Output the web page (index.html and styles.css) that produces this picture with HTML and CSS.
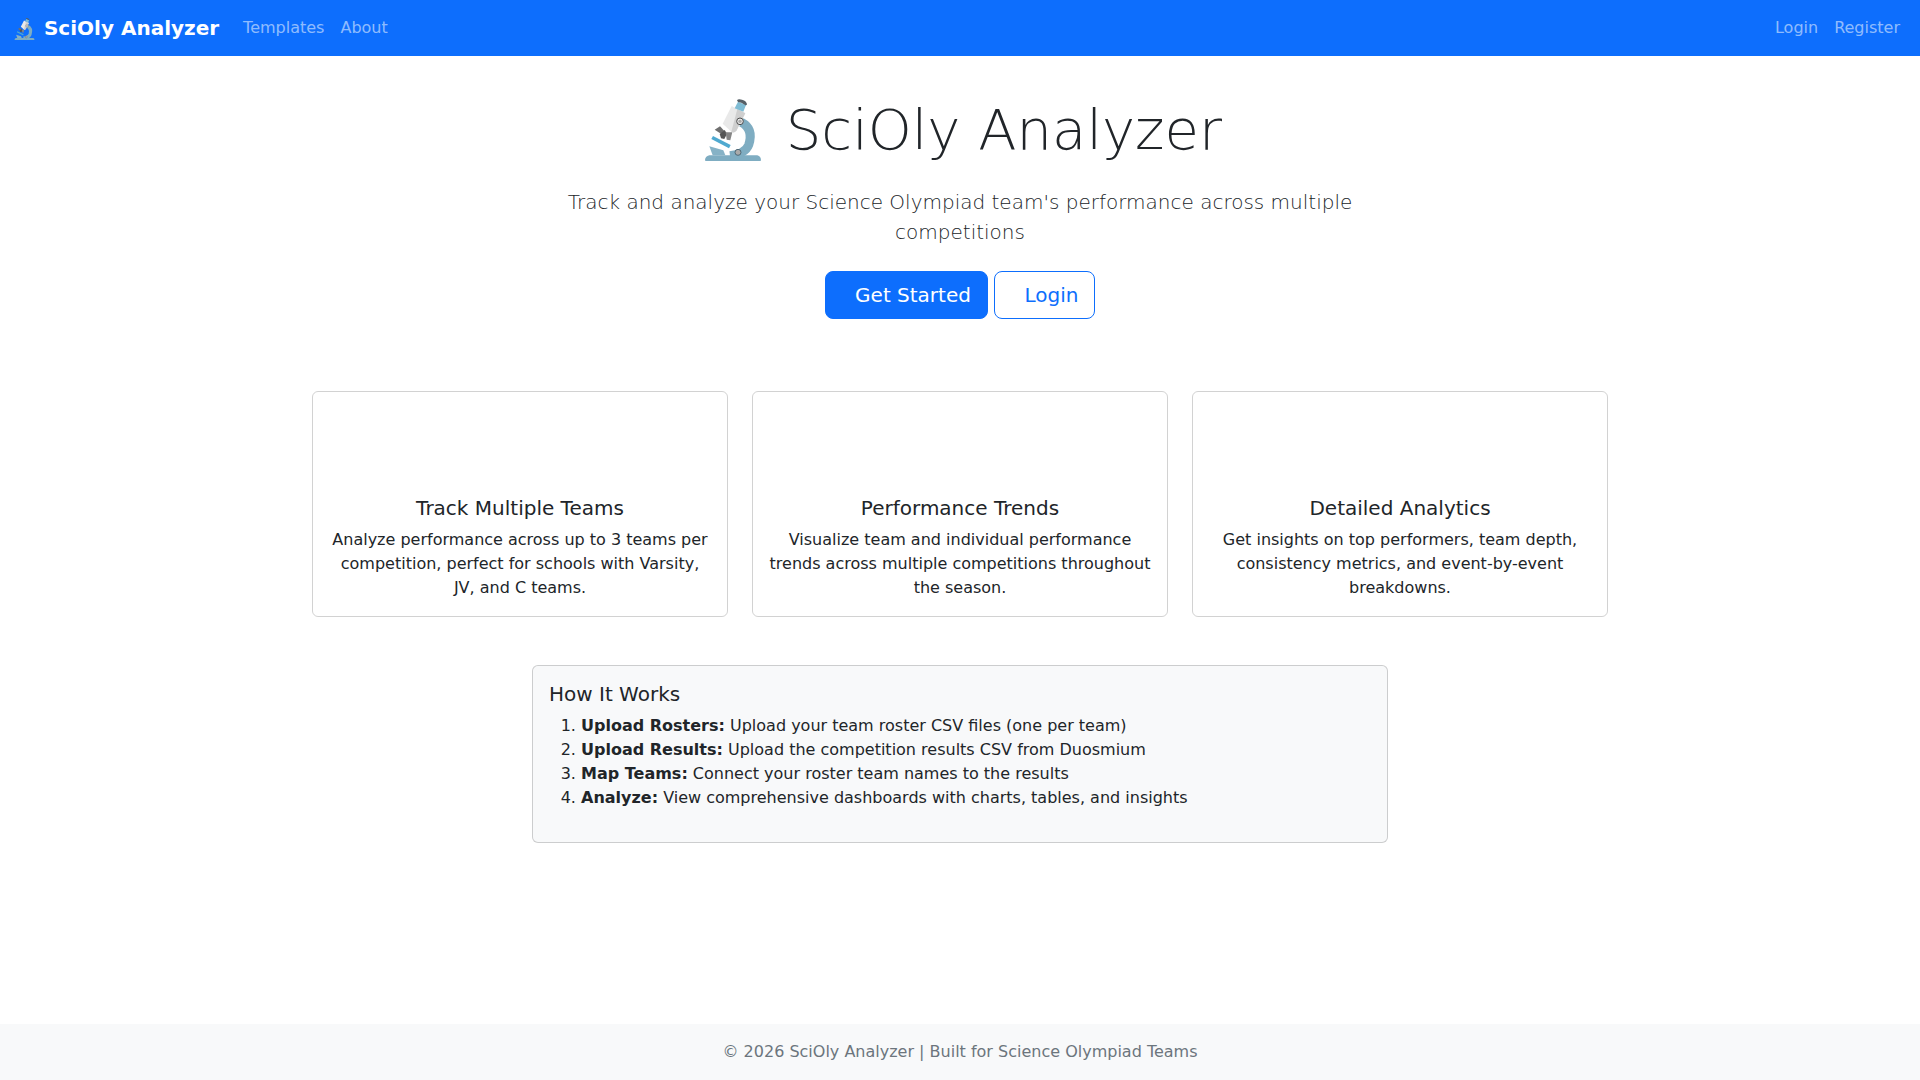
FILE: index.html
```html
<!DOCTYPE html>
<html lang="en">
<head>
<meta charset="utf-8">
<title>SciOly Analyzer</title>
<link rel="stylesheet" href="styles.css">
</head>
<body>
<svg class="defs" width="0" height="0" aria-hidden="true">
  <symbol id="scope" viewBox="54 42 210 186">
    <path d="M75 226 Q75 214 88 211 L232 211 Q243 214 243 226 Q243 228 240 228 L78 228 Q75 228 75 226 Z" fill="#7fadc2"/>
    <path d="M184 112 Q222 132 206 180 Q196 206 150 212" fill="none" stroke="#7fadc2" stroke-width="27"/>
    <path d="M88 184 L130 196 L136 211 L98 211 Z" fill="#86b2c6"/>
    <path d="M94 162 L99 153 L152 180 L147 190 Z" fill="#4fa9d0"/>
    <path d="M104 134 L120 124 L133 138 L124 147 Z" fill="#6f6f6f"/>
    <path d="M119 147 L134 135 L141 146 L133 162 L123 160 Z" fill="#555"/>
    <path d="M137 142 L157 142 L151 166 L140 164 Z" fill="#858585"/>
    <path d="M128 116 L155 63 L196 85 L170 136 Q164 146 154 140 Z" fill="#e9e9e9"/>
    <path d="M172 72 L196 85 L170 136 Q164 146 154 140 Z" fill="#cfcfcf"/>
    <path d="M164 70 L174 50 L198 60 L190 80 Z" fill="#7fbcd4"/>
    <path d="M171 46 Q174 41 186 44 Q200 48 201 58 Q199 63 194 59 Q184 51 174 51 Z" fill="#555f66"/>
    <circle cx="180" cy="109" r="10" fill="#e6e6e6" stroke="#4d4d4d" stroke-width="3"/>
    <circle cx="180" cy="109" r="5" fill="#aaa"/>
    <circle cx="174" cy="202" r="9" fill="#aaa" stroke="#4f6a78" stroke-width="3"/>
  </symbol>
</svg>
<nav class="navbar">
  <a class="brand" href="#"><svg class="emoji-sm"><use href="#scope"/></svg> SciOly Analyzer</a>
  <ul class="nav-list grow">
    <li><a class="nav-link" href="#">Templates</a></li>
    <li><a class="nav-link" href="#">About</a></li>
  </ul>
  <ul class="nav-list">
    <li><a class="nav-link" href="#">Login</a></li>
    <li><a class="nav-link" href="#">Register</a></li>
  </ul>
</nav>
<main class="container">
  <section class="hero">
    <h1 class="title"><svg class="emoji-lg"><use href="#scope"/></svg> SciOly Analyzer</h1>
    <div class="lead-wrap"><p class="lead">Track and analyze your Science Olympiad team's performance across multiple competitions</p></div>
    <div class="actions">
      <a class="btn btn-primary" href="#"><span class="icon-slot"></span>Get Started</a>
      <a class="btn btn-outline" href="#"><span class="icon-slot"></span>Login</a>
    </div>
  </section>
  <section class="cards">
    <article class="card">
      <div class="card-icon"></div>
      <h2 class="card-title">Track Multiple Teams</h2>
      <p class="card-text">Analyze performance across up to 3 teams per competition, perfect for schools with Varsity, JV, and C teams.</p>
    </article>
    <article class="card">
      <div class="card-icon"></div>
      <h2 class="card-title">Performance Trends</h2>
      <p class="card-text">Visualize team and individual performance trends across multiple competitions throughout the season.</p>
    </article>
    <article class="card">
      <div class="card-icon"></div>
      <h2 class="card-title">Detailed Analytics</h2>
      <p class="card-text">Get insights on top performers, team depth, consistency metrics, and event-by-event breakdowns.</p>
    </article>
  </section>
  <section class="how">
    <h2 class="how-title">How It Works</h2>
    <ol class="how-list">
      <li><strong>Upload Rosters:</strong> Upload your team roster CSV files (one per team)</li>
      <li><strong>Upload Results:</strong> Upload the competition results CSV from Duosmium</li>
      <li><strong>Map Teams:</strong> Connect your roster team names to the results</li>
      <li><strong>Analyze:</strong> View comprehensive dashboards with charts, tables, and insights</li>
    </ol>
  </section>
</main>
<footer class="footer">© 2026 SciOly Analyzer | Built for Science Olympiad Teams</footer>
</body>
</html>
```
FILE: styles.css
```css
* { box-sizing: border-box; }
html, body { margin: 0; padding: 0; }
body {
  min-height: 100vh;
  display: flex;
  flex-direction: column;
  font-family: "DejaVu Sans", sans-serif;
  font-size: 16px;
  line-height: 1.5;
  color: #212529;
  background: #fff;
}
a { text-decoration: none; }
.defs { display: block; height: 0; }

.navbar {
  display: flex;
  align-items: center;
  height: 56px;
  padding: 0 12px;
  background: #0d6efd;
}
.brand {
  margin-right: 16px;
  font-size: 20px;
  font-weight: 700;
  color: #fff;
  white-space: nowrap;
}
.emoji-sm {
  width: 25px;
  height: 22px;
  vertical-align: -5px;
}
.nav-list {
  display: flex;
  list-style: none;
  margin: 0;
  padding: 0;
}
.grow { flex: 1; }
.nav-link {
  display: block;
  padding: 8px;
  color: rgba(255, 255, 255, 0.55);
}

.container {
  flex: 1;
  width: 1320px;
  margin: 0 auto;
  padding: 24px 12px 0;
}
.hero {
  padding-top: 16px;
  text-align: center;
  margin-bottom: 72px;
}
.title {
  margin: 0 0 24px;
  font-size: 56px;
  font-weight: 300;
  line-height: 1.2;
}
.emoji-lg {
  width: 70px;
  height: 62px;
  margin-bottom: -10px;
  vertical-align: -2px;
}
.lead-wrap { display: flex; justify-content: center; }
.lead {
  width: 856px;
  margin: 0 0 24px;
  font-size: 20px;
  font-weight: 300;
}
.actions {
  display: flex;
  justify-content: center;
  gap: 6px;
}
.btn {
  display: inline-block;
  padding: 8px 16px;
  border: 1px solid #0d6efd;
  border-radius: 8px;
  font-size: 20px;
  line-height: 30px;
}
.btn-primary { background: #0d6efd; color: #fff; }
.btn-outline { background: #fff; color: #0d6efd; }
.icon-slot { display: inline-block; width: 13.5px; }

.cards {
  display: grid;
  grid-template-columns: repeat(3, 416px);
  gap: 24px;
  margin-bottom: 48px;
}
.card {
  display: flex;
  flex-direction: column;
  padding: 16px;
  border: 1px solid rgba(0, 0, 0, 0.175);
  border-radius: 6px;
  text-align: center;
}
.card-icon { height: 88px; }
.card-title {
  margin: 0 0 8px;
  font-size: 20px;
  font-weight: 500;
  line-height: 1.2;
}
.card-text { margin: 0; }

.how {
  width: 856px;
  margin: 0 auto;
  padding: 16px;
  background: #f8f9fa;
  border: 1px solid rgba(0, 0, 0, 0.175);
  border-radius: 6px;
}
.how-title {
  margin: 0 0 8px;
  font-size: 20px;
  font-weight: 500;
  line-height: 1.2;
}
.how-list {
  margin: 0 0 16px;
  padding-left: 32px;
}
.how-list strong { font-weight: 700; }

.footer {
  padding: 16px 0;
  background: #f8f9fa;
  color: #6c757d;
  text-align: center;
}
```
